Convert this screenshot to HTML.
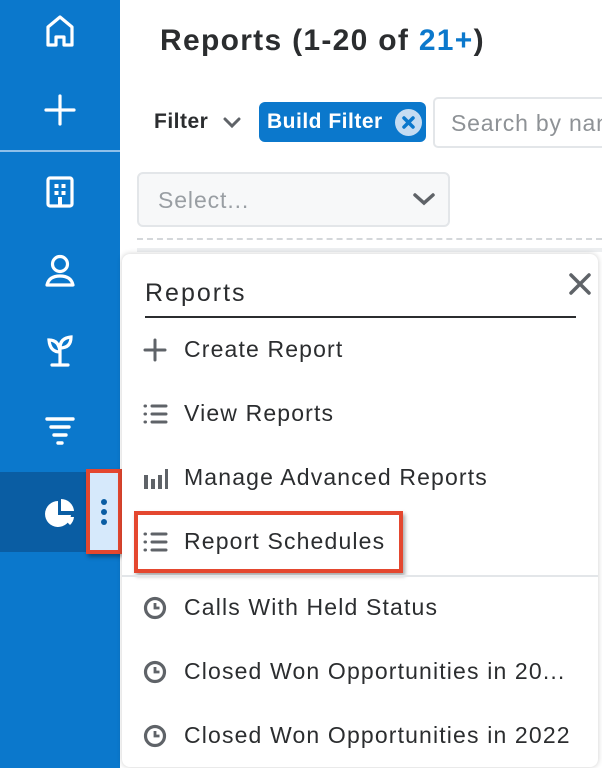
<!DOCTYPE html>
<html><head><style>
*{margin:0;padding:0;box-sizing:border-box}
body{width:602px;height:768px;overflow:hidden;background:#fff;font-family:"Liberation Sans",sans-serif;position:relative;color:#2b2d2f}
.abs{position:absolute}
.sb{left:0;top:0;width:120px;height:768px;background:#0b78cc}
.mi{position:absolute;left:142px;font-size:23px;letter-spacing:1.15px;color:#2b2d2f;display:flex;align-items:center;white-space:nowrap}
.mi svg{margin-right:16px}
</style></head><body>
<div class="abs sb"></div>
<div class="abs" style="left:0;top:150px;width:120px;height:2px;background:#8fc0ea"></div>
<div class="abs" style="left:0;top:472px;width:120px;height:80px;background:#0a5da3"></div>
<svg class="abs" style="left:44px;top:14px" width="32" height="34" viewBox="0 0 32 34" fill="none" stroke="#fff" stroke-width="3.2" stroke-linejoin="round"><path d="M4 13 L16 3 L28 13 V31 H20 V23 H12 V31 H4 Z"/></svg>
<svg class="abs" style="left:44px;top:94px" width="32" height="32" stroke="#fff" stroke-width="3.2" stroke-linecap="round"><path d="M16 2V30M2 16H30"/></svg>
<svg class="abs" style="left:46px;top:176px" width="28" height="32" fill="none" stroke="#fff" stroke-width="3.2"><rect x="2" y="2" width="24" height="28" rx="2"/><g fill="#fff" stroke="none"><rect x="8.5" y="8" width="4" height="4"/><rect x="15.5" y="8" width="4" height="4"/><rect x="8.5" y="15" width="4" height="4"/><rect x="15.5" y="15" width="4" height="4"/><rect x="12" y="21" width="4" height="8"/></g></svg>
<svg class="abs" style="left:44px;top:254px" width="32" height="34" fill="none" stroke="#fff" stroke-width="3.2"><circle cx="16" cy="10" r="7.5"/><path d="M3 31 Q5 22 16 22 Q27 22 29 31 Z" stroke-linejoin="round"/></svg>
<svg class="abs" style="left:46px;top:334px" width="28" height="34" fill="none" stroke="#fff" stroke-width="3.2" stroke-linecap="round"><path d="M14 14V31M6 31H22M14 18 Q4 18 3 6 Q13 6 14 18 M14 14 Q14 4 25 3 Q25 14 14 14"/></svg>
<svg class="abs" style="left:44px;top:416px" width="32" height="32" stroke="#fff" stroke-width="3.4" stroke-linecap="round"><path d="M3 3H29M7 11H25M10 19H22M14 27H18"/></svg>
<svg class="abs" style="left:44px;top:497px" width="34" height="32"><path d="M14 4 A13 13 0 1 0 27 18 H14 Z" fill="#fff"/><path d="M17 2 A13 13 0 0 1 30 14 H17 Z" fill="#fff"/><path d="M18 20 L30 20 A13 13 0 0 1 26 28Z" fill="#fff"/></svg>
<div class="abs" style="left:86px;top:469px;width:36px;height:85px;background:#d6e9fb;border:4px solid #e4472f;box-shadow:2px 3px 4px rgba(0,0,0,.35)"></div>
<div class="abs" style="left:101px;top:499px;width:6px;height:6px;border-radius:50%;background:#0a5da3"></div>
<div class="abs" style="left:101px;top:509px;width:6px;height:6px;border-radius:50%;background:#0a5da3"></div>
<div class="abs" style="left:101px;top:519px;width:6px;height:6px;border-radius:50%;background:#0a5da3"></div>
<div class="abs" style="left:160px;top:24px;font-size:30px;letter-spacing:1.3px;font-weight:bold;color:#2b2d2f;white-space:nowrap">Reports (1-20 of <span style="color:#0b78cc">21+</span>)</div>
<div class="abs" style="left:154px;top:110px;font-size:21px;letter-spacing:0.5px;font-weight:bold">Filter</div>
<svg class="abs" style="left:222px;top:116px" width="20" height="14" fill="none" stroke="#5f6368" stroke-width="3" stroke-linecap="round"><path d="M3 3L10 10L17 3"/></svg>
<div class="abs" style="left:259px;top:102px;width:167px;height:40px;background:#0b78cc;border-radius:6px"></div>
<div class="abs" style="left:267px;top:110px;font-size:21px;letter-spacing:0.5px;font-weight:bold;color:#fff">Build Filter</div>
<div class="abs" style="left:395px;top:109px;width:27px;height:27px;border-radius:50%;background:#c5dcf2"></div>
<svg class="abs" style="left:395px;top:109px" width="27" height="27" stroke="#0b78cc" stroke-width="3.5" stroke-linecap="round"><path d="M9 9L18 18M18 9L9 18"/></svg>
<div class="abs" style="left:433px;top:97px;width:180px;height:51px;border:2px solid #e3e6e9;border-radius:5px;background:#fff"></div>
<div class="abs" style="left:451px;top:110px;font-size:23px;letter-spacing:0.8px;color:#8e9296;white-space:nowrap">Search by nan</div>
<div class="abs" style="left:137px;top:172px;width:313px;height:55px;border:2px solid #e3e6e9;border-radius:6px;background:#f7f8f9"></div>
<div class="abs" style="left:158px;top:187px;font-size:23px;letter-spacing:0.9px;color:#999ea3">Select...</div>
<svg class="abs" style="left:412px;top:192px" width="24" height="16" fill="none" stroke="#5f6368" stroke-width="3.5" stroke-linecap="round"><path d="M3 3L12 11L21 3"/></svg>
<div class="abs" style="left:137px;top:238px;width:465px;border-top:2px dashed #d4d7da"></div>
<div class="abs" style="left:137px;top:248px;width:465px;height:4px;background:#eceef0"></div>
<div class="abs" style="left:122px;top:254px;width:476px;height:513px;background:#fff;border-radius:8px;box-shadow:0 0 6px rgba(0,0,0,.2)"></div>
<div class="abs" style="left:145px;top:279px;font-size:25px;letter-spacing:2px;color:#2b2d2f">Reports</div>
<div class="abs" style="left:145px;top:316px;width:431px;height:2px;background:#2b2d2f"></div>
<svg class="abs" style="left:568px;top:272px" width="24" height="24" stroke="#5f6368" stroke-width="3.5" stroke-linecap="round"><path d="M3 3L21 21M21 3L3 21"/></svg>
<div class="mi" style="top:336px"><svg width="26" height="26" stroke="#5f6368" stroke-width="3" stroke-linecap="round"><path d="M13 3V23M3 13H23"/></svg>Create Report</div>
<div class="mi" style="top:400px"><svg width="26" height="26" stroke="#5f6368" stroke-width="3" stroke-linecap="round"><path d="M3 5H3.5M3 13H3.5M3 21H3.5M10 5H24M10 13H24M10 21H24"/></svg>View Reports</div>
<div class="mi" style="top:464px"><svg width="26" height="26" fill="#5f6368"><rect x="2" y="10" width="4" height="14"/><rect x="9" y="14" width="4" height="10"/><rect x="16" y="10" width="4" height="14"/><rect x="23" y="4" width="3" height="20"/></svg>Manage Advanced Reports</div>
<div class="abs" style="left:134px;top:511px;width:269px;height:62px;border:4px solid #e4472f;box-shadow:2px 3px 4px rgba(0,0,0,.35)"></div>
<div class="mi" style="top:528px"><svg width="26" height="26" stroke="#5f6368" stroke-width="3" stroke-linecap="round"><path d="M3 5H3.5M3 13H3.5M3 21H3.5M10 5H24M10 13H24M10 21H24"/></svg>Report Schedules</div>
<div class="abs" style="left:122px;top:575px;width:476px;height:2px;background:#e3e6e9"></div>
<div class="mi" style="top:594px"><svg width="26" height="26" fill="none" stroke="#5f6368" stroke-width="3.2"><circle cx="13" cy="13" r="9.5"/><path d="M13 8V13H17.5" stroke-width="2.8"/></svg>Calls With Held Status</div>
<div class="mi" style="top:658px"><svg width="26" height="26" fill="none" stroke="#5f6368" stroke-width="3.2"><circle cx="13" cy="13" r="9.5"/><path d="M13 8V13H17.5" stroke-width="2.8"/></svg>Closed Won Opportunities in 20...</div>
<div class="mi" style="top:722px"><svg width="26" height="26" fill="none" stroke="#5f6368" stroke-width="3.2"><circle cx="13" cy="13" r="9.5"/><path d="M13 8V13H17.5" stroke-width="2.8"/></svg>Closed Won Opportunities in 2022</div>
</body></html>
